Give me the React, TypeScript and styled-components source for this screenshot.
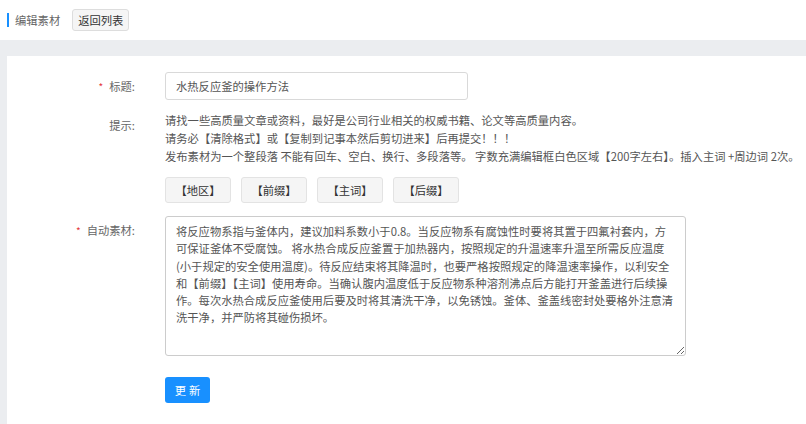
import React from "react"
import styled, { createGlobalStyle } from "styled-components"

const GlobalStyle = createGlobalStyle`
  html, body {
    margin: 0;
    padding: 0;
    background: #ebedf0;
    font-family: "Noto Sans CJK SC", "Noto Sans", sans-serif;
    font-size: 11.3px;
    color: #555;
  }
  * { box-sizing: border-box; }
`

const Page = styled.div`
  min-height: 424px;
  display: flex;
  flex-direction: column;
`

const TopBar = styled.div`
  height: 40px;
  background: #fff;
  display: flex;
  align-items: center;
  padding-left: 7px;
`

const PageTitle = styled.span`
  border-left: 2px solid #1890ff;
  padding-left: 6px;
  line-height: 14px;
  color: #666;
  margin-right: 12px;
`

const BackButton = styled.button`
  height: 22px;
  padding: 0 5px;
  font: inherit;
  color: #333;
  background: #f5f5f5;
  border: 1px solid #ddd;
  border-radius: 3px;
`

const Card = styled.div`
  flex: 1;
  background: #fff;
  margin: 16px 0 0 7px;
  padding-top: 16px;
  display: flex;
  flex-direction: column;
`

const Row = styled.div<{ $gap?: number }>`
  display: grid;
  grid-template-columns: 128px 1fr;
  column-gap: 30px;
  margin-bottom: ${(p) => p.$gap ?? 12}px;
`

const Label = styled.div`
  text-align: right;
  line-height: 28px;
  color: #666;
`

const Star = styled.span`
  color: #e4393c;
  font-size: 10px;
  margin-right: 6px;
`

const Input = styled.input`
  width: 303px;
  height: 28px;
  padding: 0 10px;
  font: inherit;
  color: #555;
  border: 1px solid #d9d9d9;
  border-radius: 3px;
  outline: none;
`

const Hint = styled.div`
  line-height: 18px;
  color: #555;
`

const Tags = styled.div`
  display: flex;
  gap: 10px;
`

const Tag = styled.button`
  width: 66px;
  height: 26px;
  font: inherit;
  color: #333;
  background: #f5f5f5;
  border: 1px solid #e3e3e3;
  border-radius: 3px;
`

const TextArea = styled.textarea`
  width: 521px;
  height: 140px;
  padding: 6px 10px;
  font: inherit;
  line-height: 17.3px;
  color: #555;
  border: 1px solid #ccc;
  border-radius: 3px;
  outline: none;
`

const SubmitButton = styled.button`
  width: 45px;
  height: 26px;
  font: inherit;
  letter-spacing: 3px;
  text-indent: 3px;
  color: #fff;
  background: #1890ff;
  border: none;
  border-radius: 3px;
`

const content =
  "将反应物系指与釜体内，建议加料系数小于0.8。当反应物系有腐蚀性时要将其置于四氟衬套内，方可保证釜体不受腐蚀。 将水热合成反应釜置于加热器内，按照规定的升温速率升温至所需反应温度(小于规定的安全使用温度)。待反应结束将其降温时，也要严格按照规定的降温速率操作，以利安全和【前缀】【主词】使用寿命。当确认腹内温度低于反应物系种溶剂沸点后方能打开釜盖进行后续操作。每次水热合成反应釜使用后要及时将其清洗干净，以免锈蚀。釜体、釜盖线密封处要格外注意清洗干净，并严防将其碰伤损坏。"

const tags = ["【地区】", "【前缀】", "【主词】", "【后缀】"]

export default function App() {
  return (
    <>
      <GlobalStyle />
      <Page>
        <TopBar>
          <PageTitle>编辑素材</PageTitle>
          <BackButton>返回列表</BackButton>
        </TopBar>
        <Card>
          <Row $gap={10}>
            <Label>
              <Star>*</Star>标题:
            </Label>
            <div>
              <Input defaultValue="水热反应釜的操作方法" />
            </div>
          </Row>
          <Row>
            <Label>提示:</Label>
            <Hint>
              请找一些高质量文章或资料，最好是公司行业相关的权威书籍、论文等高质量内容。
              <br />
              请务必【清除格式】或【复制到记事本然后剪切进来】后再提交！！！
              <br />
              发布素材为一个整段落 不能有回车、空白、换行、多段落等。 字数充满编辑框白色区域【200字左右】。插入主词 +周边词 2次。
            </Hint>
          </Row>
          <Row $gap={13}>
            <div />
            <Tags>
              {tags.map((t) => (
                <Tag key={t}>{t}</Tag>
              ))}
            </Tags>
          </Row>
          <Row $gap={18}>
            <Label>
              <Star>*</Star>自动素材:
            </Label>
            <div>
              <TextArea defaultValue={content} />
            </div>
          </Row>
          <Row>
            <div />
            <div>
              <SubmitButton>更新</SubmitButton>
            </div>
          </Row>
        </Card>
      </Page>
    </>
  )
}
